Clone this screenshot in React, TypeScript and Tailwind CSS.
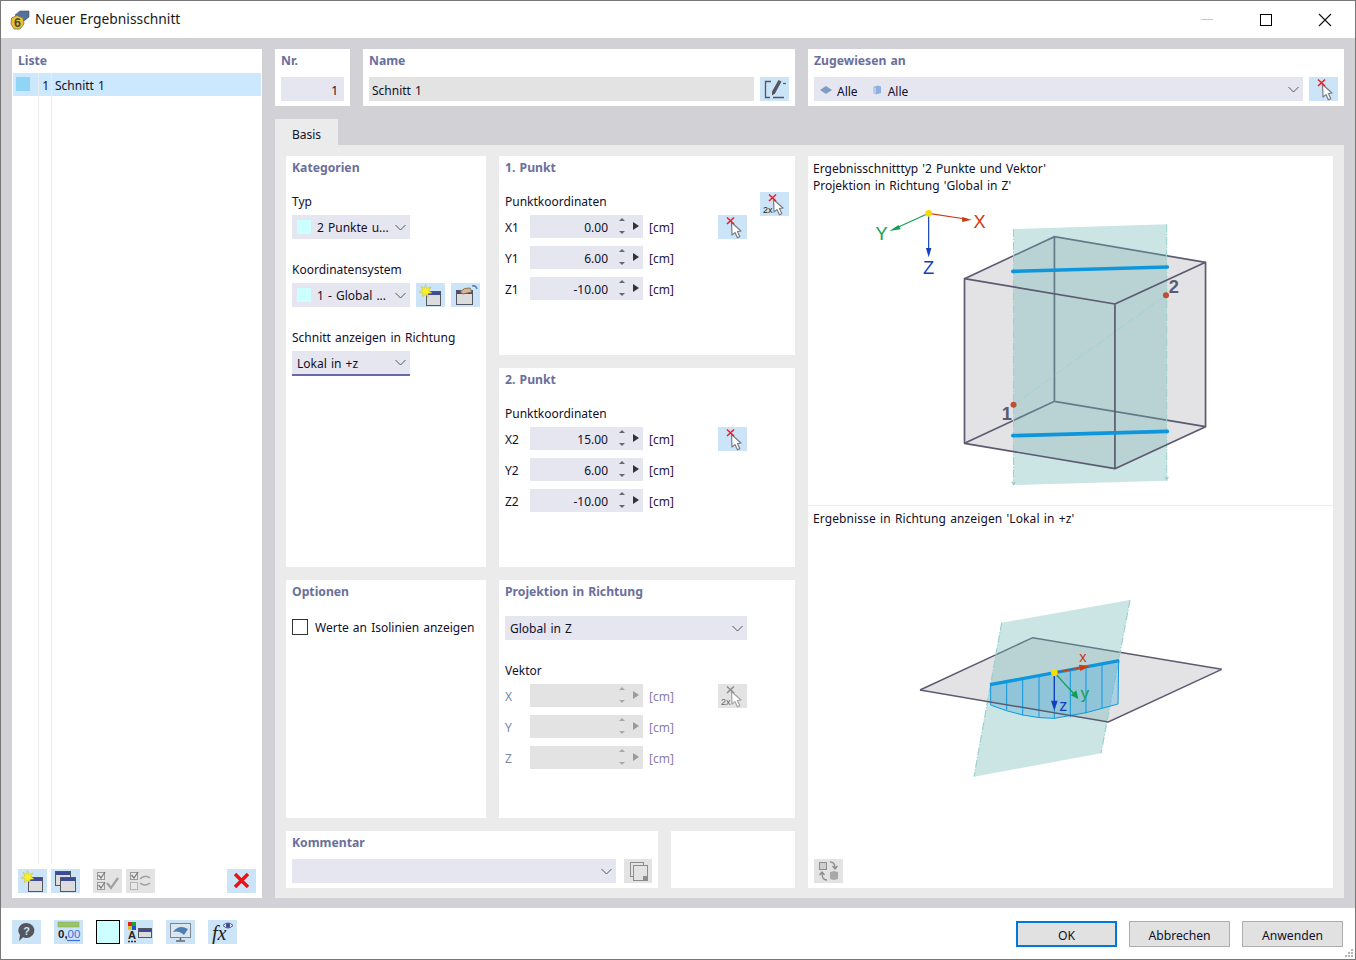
import type { ReactNode } from "react";

const titleCls = "text-[12.2px] leading-[16px] font-bold text-[#6a6f9c]";

function Chevron({ color = "#55555f" }: { color?: string }) {
  return (
    <svg width="11" height="7" viewBox="0 0 11 7" className="shrink-0">
      <path d="M0.5 1 L5.5 6 L10.5 1" fill="none" stroke={color} strokeWidth="1" />
    </svg>
  );
}

function IconBtn({ children, off = false, w = "w-[29px]" }: { children: ReactNode; off?: boolean; w?: string }) {
  return (
    <div className={`${w} h-[24px] shrink-0 ${off ? "bg-[#e3e3e3]" : "bg-[#cce4f7]"}`}>
      <svg width="29" height="24" viewBox="0 0 29 24" className="block">
        {children}
      </svg>
    </div>
  );
}

function PickIcon({ double = false, off = false }: { double?: boolean; off?: boolean }) {
  const x = off ? "#8d8d8d" : "#e8202a";
  const stroke = off ? "#a5a5a5" : "#7c7c84";
  return (
    <IconBtn off={off}>
      <path
        d="M13.5 7.5 L23 16 L19.4 16.6 L21.8 21.6 L19.4 22.8 L17 17.6 L14 20 Z"
        fill="#fff"
        stroke={stroke}
        strokeWidth="1.2"
        strokeLinejoin="round"
      />
      <path d="M9 2.5 L16 9 M16 2.5 L9 9" stroke={x} strokeWidth="1.6" fill="none" />
      {double && (
        <text x="3" y="21" fontSize="9" fontFamily="Liberation Sans, sans-serif" fill={off ? "#666" : "#222"}>
          2x
        </text>
      )}
    </IconBtn>
  );
}

function WinShape({ x, y, w, h }: { x: number; y: number; w: number; h: number }) {
  return (
    <g>
      <rect x={x + 0.5} y={y + 0.5} width={w} height={h} fill="#dcdcdc" stroke="#55555f" />
      <rect x={x + 1} y={y + 1} width={w - 1} height="3" fill="#3d4a94" />
    </g>
  );
}

function StarWinIcon() {
  return (
    <IconBtn>
      <WinShape x={10} y={8} w={14} h={14} />
      <path
        d="M9.5 1.5 L10.8 5.4 L15 4 L12.8 7.6 L16 10 L12 10.4 L11.8 14 L9.4 11 L6.4 13.6 L7 9.8 L3 9 L6.8 7 L5 3.4 L8.4 5.2 Z"
        fill="#f7f02a"
        stroke="#c7b82a"
        strokeWidth="0.5"
      />
    </IconBtn>
  );
}

function Select({ children, w, swatch = false, underline = false }: { children?: ReactNode; w: string; swatch?: boolean; underline?: boolean }) {
  return (
    <div className={`${w} ${underline ? "h-[25px] border-b-2 border-[#6a6aa8]" : "h-[24px]"} bg-[#e6e6f0] flex items-center pl-[5px] pr-[4px] shrink-0`}>
      {swatch && <div className="w-[14px] h-[14px] bg-[#ccffff] mr-[6px] shrink-0" />}
      <div className="flex-1 min-w-0 whitespace-nowrap overflow-hidden flex items-center pt-[2px]">{children}</div>
      <Chevron />
    </div>
  );
}

function CoordRow({ label, value, off = false, action }: { label: string; value?: string; off?: boolean; action?: ReactNode }) {
  return (
    <div className="flex items-center h-[23px]">
      <div className={`w-[25px] pt-[2px] ${off ? "text-[#7b86a6]" : ""}`}>{label}</div>
      <div className={`w-[113px] h-[23px] flex items-center ${off ? "bg-[#e3e3e3]" : "bg-[#e6e6f0]"}`}>
        <div className="w-[78px] text-right pt-[2px]">{value}</div>
        <svg width="35" height="23" viewBox="0 0 35 23" className="shrink-0">
          <path d="M11 6 L14 3 L17 6 Z" fill={off ? "#a8a8a8" : "#66666c"} />
          <path d="M11 16 L14 19 L17 16 Z" fill={off ? "#a8a8a8" : "#66666c"} />
          <path d="M25 7 L31 11 L25 15 Z" fill={off ? "#9a9a9a" : "#33333a"} />
        </svg>
      </div>
      <div className={`w-[75px] pl-[6px] pt-[2px] ${off ? "text-[#8a7ea6]" : "text-[#2a2040]"}`}>[cm]</div>
      {action}
    </div>
  );
}

function PointPanel({ title, rows, double = false }: { title: string; rows: [string, string][]; double?: boolean }) {
  return (
    <section className="bg-white px-[6px] pt-[4px]">
      <div className={titleCls}>{title}</div>
      <div className="mt-[16px] h-[23px] flex items-start justify-between">
        <div className="mt-[2px]">Punktkoordinaten</div>
        {double && <PickIcon double />}
      </div>
      <div className="flex flex-col gap-[8px]">
        {rows.map(([label, value], i) => (
          <CoordRow key={label} label={label} value={value} action={i === 0 ? <PickIcon /> : undefined} />
        ))}
      </div>
    </section>
  );
}

function CubeDiagram() {
  return (
    <svg width="523" height="305" viewBox="0 135 1547 915" preserveAspectRatio="none" className="block mt-[1px] ml-[2px]" fontFamily="Liberation Sans, sans-serif">
      <polygon points="457,386 723,260 1170,337 1170,830 902,956 457,880" fill="#e3e3e6" />
      <g stroke="#5c5a70" strokeWidth="5" fill="none">
        <path d="M457 386 L723 260 L1170 337 M723 260 L723 754 M457 880 L723 754 L1170 830" />
      </g>
      <polygon points="602,237 1055,223 1055,992 602,1005" fill="#6db6b3" fillOpacity="0.357" />
      <path d="M602 237 L602 1005 M1055 223 L1055 992" stroke="#9bd0cc" strokeWidth="3" strokeDasharray="24 5 4 5" />
      <path d="M595 995 L602 1007 L609 995 Z M1048 980 L1055 992 L1062 980 Z" fill="#9bd0cc" />
      <path d="M602 764 L1053 436" stroke="#9bd0cc" strokeWidth="2.5" strokeDasharray="24 5 4 5" />
      <g stroke="#5c5a70" strokeWidth="5" fill="none" strokeLinejoin="round">
        <path d="M457 386 L902 462 L1170 337 L1170 830 L902 956 L457 880 Z M902 462 L902 956" />
      </g>
      <path d="M600 364 L1057 351 M600 857 L1057 844" stroke="#0e96dc" strokeWidth="11" strokeLinecap="round" />
      <circle cx="602" cy="764" r="9" fill="#c05030" />
      <circle cx="1053" cy="436" r="9" fill="#c05030" />
      <text x="582" y="810" fontSize="54" fontWeight="bold" fill="#5c5a70" textAnchor="middle">1</text>
      <text x="1076" y="429" fontSize="54" fontWeight="bold" fill="#5c5a70" textAnchor="middle">2</text>
      <path d="M351 190 L460 207" stroke="#cc3a10" strokeWidth="3.5" />
      <path d="M450 201 L478 209 L450 216 Z" fill="#cc3a10" />
      <path d="M351 190 L255 234" stroke="#10a050" strokeWidth="3.5" />
      <path d="M262 225 L235 243 L268 238 Z" fill="#10a050" />
      <path d="M351 190 L351 300" stroke="#1040c0" strokeWidth="3.5" />
      <path d="M343 294 L351 322 L359 294 Z" fill="#1040c0" />
      <circle cx="351" cy="190" r="10" fill="#f7dc00" />
      <text x="502" y="234" fontSize="54" fill="#cc3a10" textAnchor="middle">X</text>
      <text x="212" y="270" fontSize="54" fill="#10a050" textAnchor="middle">Y</text>
      <text x="351" y="373" fontSize="54" fill="#1040c0" textAnchor="middle">Z</text>
    </svg>
  );
}

function PlaneDiagram() {
  const ribs = [[320, 275, 360], [368, 267, 376], [417, 258, 384], [463, 250, 386], [511, 241, 382], [558, 232, 370], [606, 223, 356]];
  return (
    <svg width="340" height="200" viewBox="0 0 1020 600" className="block" fontFamily="Liberation Sans, sans-serif">
      <polygon points="60,300 398,143 965,238 625,396" fill="#e3e3e6" />
      <path d="M60 300 L398 143 L965 238" stroke="#5c5a70" strokeWidth="4.5" fill="none" />
      <polygon points="305,98 690,30 603,490 222,560" fill="#6db6b3" fillOpacity="0.357" />
      <path d="M305 98 L222 560 M690 30 L603 490" stroke="#9bd0cc" strokeWidth="3.5" strokeDasharray="24 5 4 5" />
      <path d="M272 283 L656 213 L654 342 Q560 372 463 385 Q370 385 272 345 Z" fill="#38a4e4" fillOpacity="0.32" stroke="#1098e0" strokeWidth="3" />
      {ribs.map(([x, y1, y2]) => (
        <path key={x} d={`M${x} ${y1} L${x} ${y2}`} stroke="#1098e0" strokeWidth="3" />
      ))}
      <path d="M60 300 L625 396 L965 238" stroke="#5c5a70" strokeWidth="4.5" fill="none" />
      <path d="M270 284 L658 212" stroke="#0e96dc" strokeWidth="10" />
      <path d="M463 248 L545 233" stroke="#cc3a10" strokeWidth="4" />
      <path d="M537 224 L568 229 L541 243 Z" fill="#cc3a10" />
      <path d="M463 248 L525 315" stroke="#10a050" strokeWidth="4" />
      <path d="M512 316 L535 327 L529 301 Z" fill="#10a050" />
      <path d="M463 248 L463 340" stroke="#1040c0" strokeWidth="4" />
      <path d="M453 332 L463 362 L473 332 Z" fill="#1040c0" />
      <circle cx="463" cy="248" r="10" fill="#f7dc00" />
      <text x="549" y="216" fontSize="44" fill="#cc3a10" textAnchor="middle">x</text>
      <text x="555" y="328" fontSize="50" fill="#10a050" textAnchor="middle">y</text>
      <text x="490" y="362" fontSize="48" fill="#1040c0" textAnchor="middle">z</text>
    </svg>
  );
}

function ListPanel() {
  return (
    <aside className="w-[250px] bg-white flex flex-col">
      <div className={`${titleCls} px-[6px] pt-[4px] h-[24px]`}>Liste</div>
      <div className="flex-1 flex px-[1px]">
        <div className="w-[26px] border-r border-[#ebebeb]">
          <div className="h-[23px] bg-[#cce8ff] pl-[3px] pt-[4px]">
            <div className="w-[14px] h-[14px] bg-[#90d5f5]" />
          </div>
        </div>
        <div className="w-[13px] border-r border-[#ebebeb]">
          <div className="h-[23px] bg-[#cce8ff] text-right pr-[2px] leading-[26px]">1</div>
        </div>
        <div className="flex-1">
          <div className="h-[23px] bg-[#cce8ff] pl-[3px] leading-[26px]">Schnitt 1</div>
        </div>
      </div>
      <div className="h-[34px] pt-[5px] pl-[6px] pr-[6px] flex bg-white -mt-[5px]">
        <StarWinIcon />
        <div className="ml-[4px]">
          <IconBtn>
            <WinShape x={4} y={2} w={15} h={14} />
            <WinShape x={9} y={8} w={15} h={14} />
          </IconBtn>
        </div>
        <div className="ml-[13px]">
          <IconBtn off>
            <rect x="4.5" y="3.5" width="7" height="7" fill="#e8e8e8" stroke="#9a9a9a" />
            <rect x="4.5" y="13.5" width="7" height="7" fill="#e8e8e8" stroke="#9a9a9a" />
            <path d="M5.5 6 L8 9 L12 3 M5.5 16 L8 19 L12 13" stroke="#777" strokeWidth="1.2" fill="none" />
            <path d="M14 14 L18 19 L25 9" stroke="#a0a0a0" strokeWidth="2.2" fill="none" />
          </IconBtn>
        </div>
        <div className="ml-[4px]">
          <IconBtn off>
            <rect x="4.5" y="3.5" width="7" height="7" fill="#e8e8e8" stroke="#9a9a9a" />
            <rect x="4.5" y="13.5" width="7" height="7" fill="#e8e8e8" stroke="#b5b5b5" />
            <path d="M5.5 6 L8 9 L12 3" stroke="#777" strokeWidth="1.2" fill="none" />
            <path d="M14 10 Q19 5 24 9 M24 14 Q19 18 14 14" stroke="#a0a0a0" strokeWidth="1.5" fill="none" />
          </IconBtn>
        </div>
        <div className="ml-auto">
          <IconBtn>
            <path d="M8 5 L21 18 M21 5 L8 18" stroke="#f01010" strokeWidth="3.4" />
          </IconBtn>
        </div>
      </div>
    </aside>
  );
}

function FooterIcons() {
  return (
    <div className="flex items-start">
      <IconBtn>
        <path d="M14.5 3 a8 7.5 0 1 1 -3.5 14.3 L7 21 L8 15 a8 7.5 0 0 1 6.5 -12 Z" fill="#55555f" />
        <text x="14.7" y="15" fontSize="11" fontWeight="bold" fill="#cce4f7" textAnchor="middle" fontFamily="Liberation Sans, sans-serif">?</text>
      </IconBtn>
      <div className="ml-[13px]">
        <IconBtn>
          <rect x="4" y="2" width="21" height="5" fill="#9bc46a" stroke="#7da24e" strokeWidth="0.5" />
          <text x="4" y="18" fontSize="11.5" fontFamily="Liberation Sans, sans-serif">
            <tspan fontWeight="bold" fill="#222">0,</tspan>
            <tspan fill="#3c6fd8">00</tspan>
          </text>
          <path d="M13 20.5 L26 20.5" stroke="#3c6fd8" strokeWidth="1.2" />
        </IconBtn>
      </div>
      <div className="ml-[13px] w-[24px] h-[24px] bg-[#ccffff] border border-black" />
      <div className="ml-[4px]">
        <IconBtn>
          <rect x="4" y="2" width="4" height="4" fill="#e02020" />
          <rect x="8" y="2" width="4" height="4" fill="#20a030" />
          <rect x="4" y="6" width="4" height="4" fill="#e0c020" />
          <rect x="8" y="6" width="4" height="4" fill="#2050d0" />
          <text x="8" y="19" fontSize="11" fontWeight="bold" textAnchor="middle" fontFamily="Liberation Sans, sans-serif" fill="#222">A</text>
          <path d="M4 21.5 H12" stroke="#333" strokeWidth="1.5" strokeDasharray="2 1" />
          <WinShape x={14} y={8} w={13} h={9} />
        </IconBtn>
      </div>
      <div className="ml-[13px]">
        <IconBtn>
          <rect x="4.5" y="3.5" width="20" height="14" fill="#dbe6ef" stroke="#7d8590" />
          <path d="M7 12 Q13 4 22 9 L18 15 Q13 10 7 12 Z" fill="#4d7fb5" />
          <path d="M14.5 18 V20.5 M10 21 H19" stroke="#66666c" strokeWidth="1.5" />
        </IconBtn>
      </div>
      <div className="ml-[13px]">
        <IconBtn>
          <text x="4" y="20" fontSize="20" fontStyle="italic" fontFamily="Liberation Serif, serif" fill="#222">fx</text>
          <path d="M15 5.5 Q20 0.5 25 5.5 Q20 10.5 15 5.5 Z" fill="#fff" stroke="#3d4a94" />
          <circle cx="20" cy="5.5" r="2.2" fill="#3d4a94" />
        </IconBtn>
      </div>
    </div>
  );
}

export default function App() {
  const btn = "w-[101px] h-[26px] bg-[#e1e1e1] flex items-center justify-center text-[12.2px] pt-[4px]";
  return (
    <div className="w-[1356px] h-[960px] flex flex-col bg-white border border-[#777] text-[12px] leading-[16px] text-[#10102a] [word-spacing:1px] [font-family:'Noto_Sans',sans-serif] overflow-hidden">
      <header className="h-[37px] flex items-center shrink-0">
        <svg width="22" height="22" viewBox="0 0 22 22" className="ml-[8px] mr-[4px]">
          <path d="M6 6 L11 2 L20 2 L20 8 L15 12 L9 9 Z" fill="#54709c" stroke="#3f4d66" strokeWidth="0.6" />
          <path d="M2.5 9 L8 6.5 L14 9 L15 15 L11 20 L5 20 L2 15 Z" fill="#e8c232" stroke="#77704a" strokeWidth="0.8" />
          <text x="8.5" y="18" fontSize="12.5" fontWeight="bold" fill="#4e4a36" textAnchor="middle" fontFamily="Liberation Sans, sans-serif">6</text>
        </svg>
        <div className="text-[13.8px] text-[#1a1a1a] pb-[2px]">Neuer Ergebnisschnitt</div>
        <div className="ml-auto flex h-full pr-[1px]">
          <div className="w-[59px] flex items-center justify-center">
            <div className="w-[12px] h-[1px] bg-[#c8c8c8]" />
          </div>
          <div className="w-[59px] flex items-center justify-center">
            <div className="w-[12px] h-[12px] border border-black" />
          </div>
          <div className="w-[59px] flex items-center justify-center">
            <svg width="14" height="14" viewBox="0 0 14 14">
              <path d="M1 1 L13 13 M13 1 L1 13" stroke="#111" strokeWidth="1.1" />
            </svg>
          </div>
        </div>
      </header>

      <main className="flex-1 bg-[#d2d1d6] pt-[11px] px-[11px] pb-[10px] flex gap-[13px] min-h-0">
        <ListPanel />

        <div className="flex-1 flex flex-col min-w-0">
          <div className="h-[57px] flex gap-[13px] shrink-0">
            <section className="w-[75px] bg-white px-[6px] pt-[4px]">
              <div className={titleCls}>Nr.</div>
              <div className="mt-[8px] h-[24px] bg-[#e6e6f0] flex items-center justify-end pr-[6px] pt-[4px]">1</div>
            </section>
            <section className="w-[432px] bg-white px-[6px] pt-[4px]">
              <div className={titleCls}>Name</div>
              <div className="mt-[8px] flex justify-between">
                <div className="w-[385px] h-[24px] bg-[#e3e3e3] flex items-center pl-[3px] pt-[4px]">Schnitt 1</div>
                <IconBtn>
                  <path d="M11 4.5 H5.5 V20.5 H10 M13 20.5 H24" stroke="#55555f" strokeWidth="1.3" fill="none" />
                  <path d="M18.5 3 L21.5 4.5 L15 16.5 L12 18.5 L12 14.5 Z" fill="#55555f" />
                  <path d="M23 6.5 H26" stroke="#55555f" strokeWidth="1.2" />
                </IconBtn>
              </div>
            </section>
            <section className="flex-1 bg-white px-[6px] pt-[4px]">
              <div className={titleCls}>Zugewiesen an</div>
              <div className="mt-[8px] flex justify-between">
                <Select w="w-[489px]">
                  <svg width="12" height="8" viewBox="0 0 12 8" className="ml-[1px] mr-[5px]">
                    <path d="M0 4 L6 0 L12 4 L6 8 Z" fill="#7f9cc4" />
                  </svg>
                  <span className="pt-[4px]">Alle</span>
                  <svg width="10" height="10" viewBox="0 0 10 10" className="ml-[14px] mr-[6px]">
                    <path d="M1 2 L6 0.5 L9 1.5 V8 L4 9.5 L1 8 Z" fill="#8fb0dc" />
                    <path d="M1 2 L4 3 V9.5 L1 8 Z" fill="#b9cde8" />
                  </svg>
                  <span className="pt-[4px]">Alle</span>
                </Select>
                <PickIcon />
              </div>
            </section>
          </div>

          <div className="mt-[13px] w-[63px] h-[26px] bg-[#ebebeb] shrink-0 flex items-center justify-center pt-[6px]">Basis</div>

          <div className="flex-1 bg-[#ebebeb] pt-[11px] px-[11px] pb-[10px] flex gap-[13px] min-h-0">
            <div className="w-[509px] flex flex-col gap-[13px]">
              <div className="grid grid-cols-[200px_296px] grid-rows-[199px_199px_238px] gap-[13px]">
                <section className="row-span-2 bg-white px-[6px] pt-[4px]">
                  <div className={titleCls}>Kategorien</div>
                  <div className="mt-[18px]">Typ</div>
                  <div className="mt-[5px]">
                    <Select w="w-[118px]" swatch>2 Punkte u...</Select>
                  </div>
                  <div className="mt-[23px]">Koordinatensystem</div>
                  <div className="mt-[5px] flex">
                    <Select w="w-[118px]" swatch>1 - Global ...</Select>
                    <div className="ml-[6px]"><StarWinIcon /></div>
                    <div className="ml-[6px]">
                      <IconBtn>
                        <WinShape x={5} y={7} w={16} h={14} />
                        <path d="M9 9 Q13 4 19 5 L21 9 L12 11 Z" fill="#d9b48f" stroke="#6b5a4a" strokeWidth="0.7" />
                        <path d="M21 3 Q25 2 26 6" stroke="#4d7fb5" strokeWidth="1.5" fill="none" />
                      </IconBtn>
                    </div>
                  </div>
                  <div className="mt-[23px]">Schnitt anzeigen in Richtung</div>
                  <div className="mt-[5px]">
                    <Select w="w-[118px]" underline>Lokal in +z</Select>
                  </div>
                </section>

                <PointPanel title="1. Punkt" double rows={[["X1", "0.00"], ["Y1", "6.00"], ["Z1", "-10.00"]]} />
                <PointPanel title="2. Punkt" rows={[["X2", "15.00"], ["Y2", "6.00"], ["Z2", "-10.00"]]} />

                <section className="bg-white px-[6px] pt-[4px]">
                  <div className={titleCls}>Optionen</div>
                  <div className="mt-[18px] flex items-center">
                    <div className="w-[16px] h-[16px] bg-white border border-[#333]" />
                    <div className="ml-[7px] pt-[2px]">Werte an Isolinien anzeigen</div>
                  </div>
                </section>

                <section className="bg-white px-[6px] pt-[4px]">
                  <div className={titleCls}>Projektion in Richtung</div>
                  <div className="mt-[16px]">
                    <Select w="w-[242px]">Global in Z</Select>
                  </div>
                  <div className="mt-[23px]">Vektor</div>
                  <div className="mt-[5px] flex flex-col gap-[8px]">
                    <CoordRow off label="X" action={<PickIcon double off />} />
                    <CoordRow off label="Y" />
                    <CoordRow off label="Z" />
                  </div>
                </section>
              </div>

              <div className="flex-1 flex gap-[13px]">
                <section className="w-[372px] bg-white px-[6px] pt-[4px]">
                  <div className={titleCls}>Kommentar</div>
                  <div className="mt-[8px] flex justify-between">
                    <Select w="w-[324px]" />
                    <div className="w-[28px]">
                      <IconBtn off w="w-[28px]">
                        <rect x="6.5" y="3.5" width="13" height="14" fill="#e3e3e3" stroke="#8d8d8d" />
                        <rect x="9.5" y="6.5" width="14" height="15" fill="#e3e3e3" stroke="#8d8d8d" />
                        <rect x="19" y="17" width="4" height="4" fill="#8d8d8d" />
                      </IconBtn>
                    </div>
                  </div>
                </section>
                <section className="w-[124px] bg-white" />
              </div>
            </div>

            <section className="flex-1 bg-white flex flex-col">
              <div className="pl-[5px] pt-[4px] leading-[17px]">
                <div>Ergebnisschnitttyp '2 Punkte und Vektor'</div>
                <div>Projektion in Richtung 'Global in Z'</div>
              </div>
              <CubeDiagram />
              <div className="mt-[5px] border-t border-[#ebebeb] pt-[5px] pl-[5px] tracking-[0.1px]">Ergebnisse in Richtung anzeigen 'Lokal in +z'</div>
              <div className="mt-[63px] ml-[92px]">
                <PlaneDiagram />
              </div>
              <div className="mt-auto mb-[5px] ml-[6px]">
                <IconBtn off>
                  <rect x="5.5" y="3.5" width="7" height="7" fill="#cfcfcf" stroke="#8d8d8d" />
                  <path d="M16 3 Q21 3 21 9 M18.5 7 L21 10 L23.5 7 M13 21 Q8 21 8 14 M5.5 16 L8 13 L10.5 16" stroke="#8d8d8d" strokeWidth="1.3" fill="none" />
                  <path d="M16 13 L20 12 L24 13 V20 L20 21 L16 20 Z" fill="#a8a8a8" />
                </IconBtn>
              </div>
            </section>
          </div>
        </div>
      </main>

      <footer className="h-[51px] shrink-0 relative flex items-start justify-between pl-[11px] pr-[12px] pt-[12px]">
        <FooterIcons />
        <div className="flex gap-[12px] pt-[1px]">
          <div className={`${btn} border-2 border-[#0078d7]`}>OK</div>
          <div className={`${btn} border border-[#adadad]`}>Abbrechen</div>
          <div className={`${btn} border border-[#adadad]`}>Anwenden</div>
        </div>
        <svg width="10" height="10" viewBox="0 0 10 10" className="absolute right-[1px] bottom-[1px]">
          <path d="M7 1 h2 v2 h-2 Z M4 4 h2 v2 h-2 Z M7 4 h2 v2 h-2 Z M1 7 h2 v2 h-2 Z M4 7 h2 v2 h-2 Z M7 7 h2 v2 h-2 Z" fill="#b5b5b5" />
        </svg>
      </footer>
    </div>
  );
}
